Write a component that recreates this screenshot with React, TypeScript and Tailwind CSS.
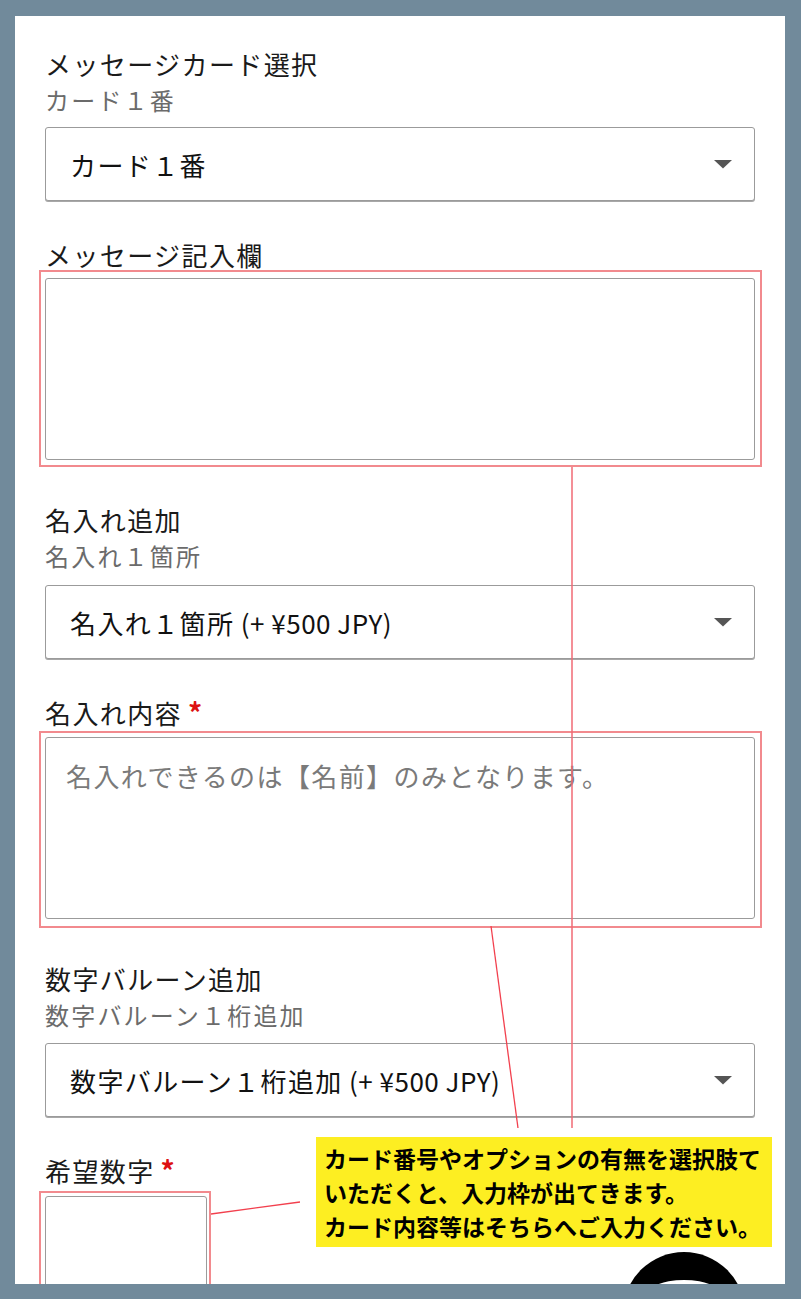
import React from 'react';

const FONT = "font-['Noto_Sans_CJK_JP','Noto_Sans',sans-serif]";

const Arrow = () => (
  <svg width="20" height="10" viewBox="0 0 20 10" className="shrink-0">
    <path d="M1 1 H19 L10 9.5 Z" fill="#555" />
  </svg>
);

const Label = ({ text, required }: { text: string; required?: boolean }) => (
  <div className="text-[26px] leading-[36px] tracking-[1.4px] text-[#1a1a1a]">
    {text}
    {required && <span className="ml-[6px] text-[28px] font-bold text-[#dd1111]">*</span>}
  </div>
);

const SubLabel = ({ text }: { text: string }) => (
  <div className="text-[24px] leading-[36px] tracking-[2.2px] text-[#6b6b6b]">{text}</div>
);

const SelectBox = ({ value, price, className = '' }: { value: string; price?: string; className?: string }) => (
  <div
    className={`flex h-[74px] items-center justify-between rounded-[3px] border border-[#9b9b9b] bg-white pl-[24px] pr-[21px] text-[26px] text-[#111] shadow-[0_1px_0_#a8a8a8] ${className}`}
  >
    <span className="whitespace-nowrap">
      <span className="tracking-[1.4px]">{value}</span>
      {price && <span className="tracking-[0.5px]"> {price}</span>}
    </span>
    <Arrow />
  </div>
);

// red annotation frame drawn over a field
const Marker = ({ className }: { className: string }) => (
  <div className={`pointer-events-none absolute border-2 border-[#f28a8e] ${className}`} />
);

export default function App() {
  return (
    <div className={`h-[1299px] w-[801px] overflow-hidden bg-[#718a9b] pl-[15px] pt-[16px] ${FONT}`}>
      <div className="relative h-[1268px] w-[770px] overflow-hidden bg-white px-[30px] pt-[30px]">
        {/* メッセージカード選択 */}
        <Label text="メッセージカード選択" />
        <SubLabel text="カード１番" />
        <SelectBox value="カード１番" className="mt-[9px]" />

        {/* メッセージ記入欄 */}
        <div className="mt-[36px]">
          <Label text="メッセージ記入欄" />
        </div>
        <div className="relative mt-[5px]">
          <div className="h-[182px] rounded-[3px] border border-[#9b9b9b]" />
          <Marker className="-bottom-[7px] -left-[6px] -right-[7px] -top-[8px]" />
        </div>

        {/* 名入れ追加 */}
        <div className="mt-[42px]">
          <Label text="名入れ追加" />
        </div>
        <SubLabel text="名入れ１箇所" />
        <SelectBox value="名入れ１箇所" price="(+ ¥500 JPY)" className="mt-[11px]" />

        {/* 名入れ内容 */}
        <div className="mt-[35px]">
          <Label text="名入れ内容" required />
        </div>
        <div className="relative mt-[6px]">
          <div className="h-[182px] rounded-[3px] border border-[#9b9b9b] pl-[20px] pt-[20px] text-[26px] leading-[36px] tracking-[1.4px] text-[#7a7a7a]">
            名入れできるのは【名前】のみとなります。
          </div>
          <Marker className="-bottom-[9px] -left-[6px] -right-[7px] -top-[6px]" />
        </div>

        {/* 数字バルーン追加 */}
        <div className="mt-[42px]">
          <Label text="数字バルーン追加" />
        </div>
        <SubLabel text="数字バルーン１桁追加" />
        <SelectBox value="数字バルーン１桁追加" price="(+ ¥500 JPY)" className="mt-[10px]" />

        {/* 希望数字 */}
        <div className="mt-[35px]">
          <Label text="希望数字" required />
        </div>
        <div className="relative mt-[7px] w-[162px]">
          <div className="h-[130px] rounded-[3px] border border-[#9b9b9b]" />
          <Marker className="-bottom-[10px] -left-[6px] -right-[4px] -top-[5px]" />
        </div>

        {/* annotation leader lines */}
        <svg className="pointer-events-none absolute left-0 top-0" width="770" height="1268">
          <line x1="557" y1="451" x2="557" y2="1112" stroke="#f06a74" strokeWidth="1.5" />
          <line x1="476" y1="910" x2="503" y2="1112" stroke="#f2404e" strokeWidth="1.3" />
          <line x1="196" y1="1198" x2="285" y2="1186" stroke="#f2404e" strokeWidth="1.3" />
        </svg>

        {/* yellow note */}
        <div className="absolute left-[301px] top-[1121px] h-[110px] w-[456px] bg-[#fdee22] pl-[8px] pt-[4px] text-[23px] font-bold leading-[34px] text-black">
          <div className="whitespace-nowrap">カード番号やオプションの有無を選択肢て</div>
          <div className="whitespace-nowrap">いただくと、入力枠が出てきます。</div>
          <div className="whitespace-nowrap">カード内容等はそちらへご入力ください。</div>
        </div>

        {/* floating button, cut off at the bottom */}
        <svg className="absolute left-[600px] top-[1230px]" width="140" height="140">
          <circle cx="69" cy="67" r="61" fill="#000" />
          <ellipse cx="69" cy="52" rx="40" ry="18" fill="#fff" />
        </svg>
      </div>
    </div>
  );
}
